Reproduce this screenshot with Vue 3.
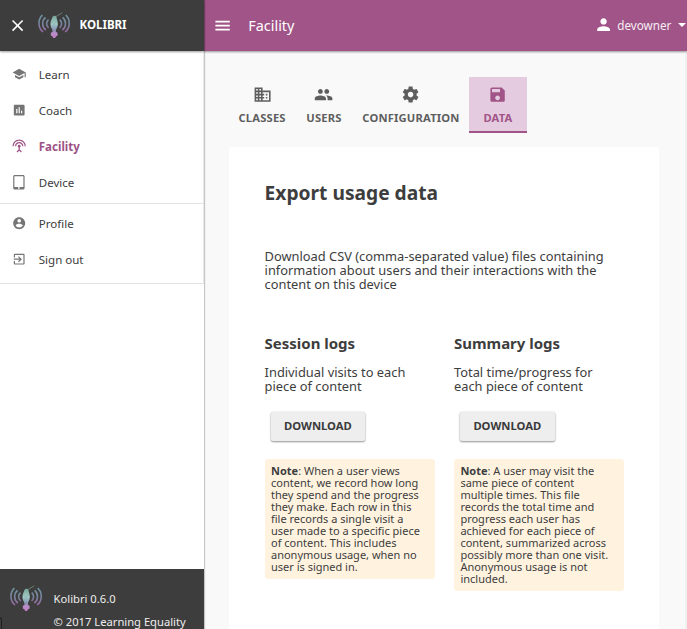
<script setup>
const mainNav = [
  { label: 'Learn', d: 'M5 13.18v4L12 21l7-3.82v-4L12 17l-7-3.82zM12 3L1 9l11 6 9-4.91V17h2V9L12 3z' },
  { label: 'Coach', d: 'M19 3H5c-1.1 0-2 .9-2 2v14c0 1.1.9 2 2 2h14c1.1 0 2-.9 2-2V5c0-1.1-.9-2-2-2zM9 17H7v-7h2v7zm4 0h-2V7h2v10zm4 0h-2v-4h2v4z' },
  { label: 'Facility', active: true, d: 'M12 5c-3.87 0-7 3.13-7 7h2c0-2.76 2.24-5 5-5s5 2.24 5 5h2c0-3.87-3.13-7-7-7zm1 9.29c.88-.39 1.5-1.26 1.5-2.29 0-1.38-1.12-2.5-2.5-2.5S9.5 10.62 9.5 12c0 1.02.62 1.9 1.5 2.29v3.3L7.59 21 9 22.41l3-3 3 3L16.41 21 13 17.59v-3.3zM12 1C5.93 1 1 5.93 1 12h2c0-4.97 4.03-9 9-9s9 4.03 9 9h2c0-6.07-4.93-11-11-11z' },
  { label: 'Device', d: 'M18.5 0h-14C3.12 0 2 1.12 2 2.5v19C2 22.88 3.12 24 4.5 24h14c1.38 0 2.5-1.12 2.5-2.5v-19C21 1.12 19.88 0 18.5 0zm-7 23c-.83 0-1.5-.67-1.5-1.5s.67-1.5 1.5-1.5 1.5.67 1.5 1.5-.67 1.5-1.5 1.5zm7.5-3H4V2h15v18z' },
]
const userNav = [
  { label: 'Profile', d: 'M12 2C6.48 2 2 6.48 2 12s4.48 10 10 10 10-4.48 10-10S17.52 2 12 2zm0 3c1.66 0 3 1.34 3 3s-1.34 3-3 3-3-1.34-3-3 1.34-3 3-3zm0 14.2c-2.5 0-4.71-1.28-6-3.22.03-1.99 4-3.08 6-3.08 1.99 0 5.97 1.09 6 3.08-1.29 1.94-3.5 3.22-6 3.22z' },
  { label: 'Sign out', d: 'M10.09 15.59L11.5 17l5-5-5-5-1.41 1.41L12.67 11H3v2h9.67l-2.58 2.59zM19 3H5c-1.11 0-2 .9-2 2v4h2V5h14v14H5v-4H3v4c0 1.1.89 2 2 2h14c1.1 0 2-.9 2-2V5c0-1.1-.9-2-2-2z' },
]
const groups = [mainNav, userNav]
const tabs = [
  { label: 'CLASSES', d: 'M12 7V3H2v18h20V7H12zM6 19H4v-2h2v2zm0-4H4v-2h2v2zm0-4H4V9h2v2zm0-4H4V5h2v2zm4 12H8v-2h2v2zm0-4H8v-2h2v2zm0-4H8V9h2v2zm0-4H8V5h2v2zm10 12h-8v-2h2v-2h-2v-2h2v-2h-2V9h8v10zm-2-8h-2v2h2v-2zm0 4h-2v2h2v-2z' },
  { label: 'USERS', d: 'M16 11c1.66 0 2.99-1.34 2.99-3S17.66 5 16 5c-1.66 0-3 1.34-3 3s1.34 3 3 3zm-8 0c1.66 0 2.99-1.34 2.99-3S9.66 5 8 5C6.34 5 5 6.34 5 8s1.34 3 3 3zm0 2c-2.33 0-7 1.17-7 3.5V19h14v-2.5c0-2.33-4.67-3.5-7-3.5zm8 0c-.29 0-.62.02-.97.05 1.16.84 1.97 1.97 1.97 3.45V19h6v-2.5c0-2.33-4.67-3.5-7-3.5z' },
  { label: 'CONFIGURATION', d: 'M19.43 12.98c.04-.32.07-.64.07-.98s-.03-.66-.07-.98l2.11-1.65c.19-.15.24-.42.12-.64l-2-3.46c-.12-.22-.39-.3-.61-.22l-2.49 1c-.52-.4-1.08-.73-1.69-.98l-.38-2.65C14.46 2.18 14.25 2 14 2h-4c-.25 0-.46.18-.49.42l-.38 2.65c-.61.25-1.17.59-1.69.98l-2.49-1c-.23-.09-.49 0-.61.22l-2 3.46c-.13.22-.07.49.12.64l2.11 1.65c-.04.32-.07.65-.07.98s.03.66.07.98l-2.11 1.65c-.19.15-.24.42-.12.64l2 3.46c.12.22.39.3.61.22l2.49-1c.52.4 1.08.73 1.69.98l.38 2.65c.03.24.24.42.49.42h4c.25 0 .46-.18.49-.42l.38-2.65c.61-.25 1.17-.59 1.69-.98l2.49 1c.23.09.49 0 .61-.22l2-3.46c.12-.22.07-.49-.12-.64l-2.11-1.65zM12 15.5c-1.93 0-3.5-1.57-3.5-3.5s1.57-3.5 3.5-3.5 3.5 1.57 3.5 3.5-1.57 3.5-3.5 3.5z' },
  { label: 'DATA', active: true, d: 'M17 3H5c-1.11 0-2 .9-2 2v14c0 1.1.89 2 2 2h14c1.1 0 2-.9 2-2V7l-4-4zm-5 16c-1.66 0-3-1.34-3-3s1.34-3 3-3 3 1.34 3 3-1.34 3-3 3zm3-10H5V5h10v4z' },
]
const logs = [
  { title: 'Session logs', text: 'Individual visits to each piece of content', note: 'When a user views content, we record how long they spend and the progress they make. Each row in this file records a single visit a user made to a specific piece of content. This includes anonymous usage, when no user is signed in.' },
  { title: 'Summary logs', text: 'Total time/progress for each piece of content', note: 'A user may visit the same piece of content multiple times. This file records the total time and progress each user has achieved for each piece of content, summarized across possibly more than one visit. Anonymous usage is not included.' },
]
</script>

<template>
  <div class="page">
    <svg class="defs" width="0" height="0">
      <defs>
        <linearGradient id="wave" gradientUnits="userSpaceOnUse" x1="0" y1="3" x2="0" y2="21">
          <stop offset="0" stop-color="#7199a5" />
          <stop offset=".5" stop-color="#77839b" />
          <stop offset="1" stop-color="#a466a8" />
        </linearGradient>
        <linearGradient id="bird" gradientUnits="userSpaceOnUse" x1="0" y1="3" x2="0" y2="26">
          <stop offset="0" stop-color="#73a294" />
          <stop offset=".4" stop-color="#a3ccc8" />
          <stop offset=".62" stop-color="#8799b2" />
          <stop offset=".8" stop-color="#b98bc8" />
          <stop offset="1" stop-color="#c47fc4" />
        </linearGradient>
        <symbol id="logo" viewBox="0 0 32 27">
          <g fill="none" stroke="url(#wave)" stroke-width="1.6">
            <path d="M4.4 3.2C-.3 7.5-.3 15.5 5 20M7.5 5.3C3.7 8.5 3.7 14.8 7.8 18M10.5 7.6C8 9.6 8 13.7 10.6 15.8" />
            <path d="M27.8 3.2C32.5 7.5 32.5 15.5 27.2 20M24.7 5.3C28.5 8.5 28.5 14.8 24.4 18M21.7 7.6C24.2 9.6 24.2 13.7 21.6 15.8" />
          </g>
          <path d="M17.4 4.9 24.3.8" stroke="#687e72" stroke-width="1" />
          <path fill="url(#bird)" d="M14.4 5.2c.8-1.6 3.2-1.8 4-.4.4 1 .2 2.2.9 3.6.9 2.3.7 6-.9 8.4l-.7 2.6 1.9 1.6v2.5l-1.7 1-.8 1.6h-1.9l-.7-1.6-1.7-1v-2.5l1.9-1.6-.8-2.6c-1.6-2.4-1.8-6.1-.8-8.4.6-1.2 1-2.2 1.3-3.2z" />
          <path d="m13.4 10 5.2 5M18.6 9.6l-5 5.6M14.5 18.3h3.3" stroke="#5f7f8c" stroke-opacity=".4" stroke-width=".6" />
        </symbol>
      </defs>
    </svg>

    <aside class="drawer">
      <header class="drawer-head">
        <svg class="icon close" viewBox="0 0 24 24"><path d="M19 6.41L17.59 5 12 10.59 6.41 5 5 6.41 10.59 12 5 17.59 6.41 19 12 13.41 17.59 19 19 17.59 13.41 12z" /></svg>
        <svg class="logo"><use href="#logo" /></svg>
        <span class="brand">KOLIBRI</span>
      </header>
      <nav class="menu">
        <ul v-for="(g, i) in groups" :key="i" class="group">
          <li v-for="n in g" :key="n.label" class="item" :class="{ active: n.active }">
            <svg class="icon" viewBox="0 0 24 24"><path fill-rule="evenodd" :d="n.d" /></svg>
            <span>{{ n.label }}</span>
          </li>
        </ul>
      </nav>
      <footer class="drawer-foot">
        <svg class="logo"><use href="#logo" /></svg>
        <div class="legal"><p>Kolibri 0.6.0</p><p>© 2017 Learning Equality</p></div>
        <i class="corner"></i>
      </footer>
    </aside>

    <div class="content">
      <header class="appbar">
        <svg class="icon burger" viewBox="0 0 24 24"><path d="M3 18h18v-2H3v2zm0-5h18v-2H3v2zm0-7v2h18V6H3z" /></svg>
        <span class="title">Facility</span>
        <div class="user">
          <svg class="icon" viewBox="0 0 24 24"><path d="M12 12c2.21 0 4-1.79 4-4s-1.79-4-4-4-4 1.79-4 4 1.79 4 4 4zm0 2c-2.67 0-8 1.34-8 4v2h16v-2c0-2.66-5.33-4-8-4z" /></svg>
          <span class="name">devowner</span>
          <svg class="caret" viewBox="0 0 8 4"><path d="M0 0h8L4 4z" /></svg>
        </div>
      </header>
      <main class="main">
        <nav class="tabs">
          <div v-for="t in tabs" :key="t.label" class="tab" :class="{ active: t.active }">
            <svg class="icon" viewBox="0 0 24 24"><path :d="t.d" /></svg>
            <span>{{ t.label }}</span>
          </div>
        </nav>
        <section class="card">
          <h1>Export usage data</h1>
          <p class="intro">Download CSV (comma-separated value) files containing information about users and their interactions with the content on this device</p>
          <div class="cols">
            <article v-for="l in logs" :key="l.title">
              <h2>{{ l.title }}</h2>
              <p class="desc">{{ l.text }}</p>
              <button>DOWNLOAD</button>
              <p class="note"><b>Note</b>: {{ l.note }}</p>
            </article>
          </div>
        </section>
      </main>
    </div>
  </div>
</template>

<style>
body { margin: 0; overflow: hidden; }
</style>

<style scoped>
* { box-sizing: border-box; }
p, h1, h2, ul { margin: 0; padding: 0; }
.page { display: flex; width: 687px; height: 629px; overflow: hidden; background: #f9f9f9; color: #3d3d3d; font: 12.85px/14px "Noto Sans", sans-serif; }
.defs { position: absolute; }
.icon { display: block; flex: none; width: 19.2px; height: 19.2px; fill: currentColor; }
.drawer { display: flex; flex-direction: column; flex: none; width: 204px; height: 629px; background: #fff; box-shadow: 1px 0 1px rgba(0, 0, 0, .2); z-index: 2; }
.drawer-head { display: flex; align-items: center; height: 51px; padding-left: 8.4px; background: #3d3d3d; color: #fff; box-shadow: 0 1px 2px rgba(0, 0, 0, .4); z-index: 1; }
.close, .burger { margin-bottom: .8px; }
.logo { flex: none; width: 32px; height: 27px; }
.drawer-head .logo { margin-left: 10.4px; }
.brand { margin: 0 0 .4px 9.5px; font-size: 11.52px; font-weight: 700; }
.menu { flex: 1; }
.group { padding: 6px 0 2px; border-bottom: 1px solid #e3e3e3; border-right: 1px solid #e8e8e8; list-style: none; }
.group + .group { padding: 2px 0 5px; }
.item { display: flex; align-items: center; height: 36px; padding-left: 12px; font-size: 11.52px; }
.item .icon { width: 14.4px; height: 14.4px; margin: 0 12.4px 1.4px 0; color: #757575; }
.item.active, .item.active .icon { color: #9d5287; }
.item.active { font-weight: 700; }
.drawer-foot { position: relative; display: flex; height: 60px; padding: 16px 0 0 10px; background: #3d3d3d; color: #eee; font-size: 11.2px; }
.legal { display: flex; flex-direction: column; gap: 9px; padding: 7px 0 0 11.6px; white-space: nowrap; }
.corner { position: absolute; left: -2px; bottom: 0; width: 4px; height: 12px; border: 1px solid #202020; border-bottom: 0; border-radius: 0 3px 0 0; }
.content { flex: 1; min-width: 0; }
.appbar { position: relative; display: flex; align-items: center; height: 51px; padding-left: 9.3px; background: #a05487; color: #fff; box-shadow: 0 1px 2px rgba(0, 0, 0, .4); z-index: 1; }
.title { margin: 0 0 0 15.8px; font-size: 14.4px; line-height: 20px; }
.user { display: flex; align-items: center; margin-left: auto; }
.user .icon { margin: 0 4.3px 1.4px 0; }
.name { font-size: 11.7px; color: #f6edf3; }
.caret { width: 8px; height: 4px; margin-left: 6.8px; margin-right: .8px; fill: #fff; }
.main { height: 578px; padding: 26px 26px 0 25px; border-right: 2px solid #f1f1f1; }
.tabs { display: flex; height: 56px; }
.tab { display: flex; flex-direction: column; align-items: center; min-width: 57.6px; padding: 8px 9.5px 0; color: #5e5e5e; font-size: 11.2px; font-weight: 700; letter-spacing: .18px; }
.tab .icon { margin-bottom: 7px; }
.tab.active { color: #a05487; background: #e5cbdf; border-bottom: 2px solid #a05487; }
.card { width: 430px; height: 482px; margin-top: 14px; padding: 35px 35.6px 0; border-radius: 2px 2px 0 0; background: #fff; }
h1 { font-size: 19.2px; line-height: 21px; }
.intro { margin-top: 46px; }
.cols { display: flex; gap: 19px; margin-top: 44px; }
article { flex: none; width: 170.4px; }
h2 { font-size: 14.98px; line-height: 16px; }
.desc { margin-top: 14px; padding-right: 20px; }
button { display: block; width: 94.6px; height: 29px; margin: 19px 0 0 6px; padding: 0 0 1px; border: 0; border-radius: 2px; background: #eee; color: #3a3a3a; font: 700 11.25px/28px "Noto Sans", sans-serif; box-shadow: 0 0 2px rgba(0, 0, 0, .12), 0 1px 2px rgba(0, 0, 0, .4); }
.note { margin-top: 18px; padding: 6px 10px 6px 6.4px; border-radius: 3px; background: #fff3e0; font-size: 11px; line-height: 12px; }
</style>
